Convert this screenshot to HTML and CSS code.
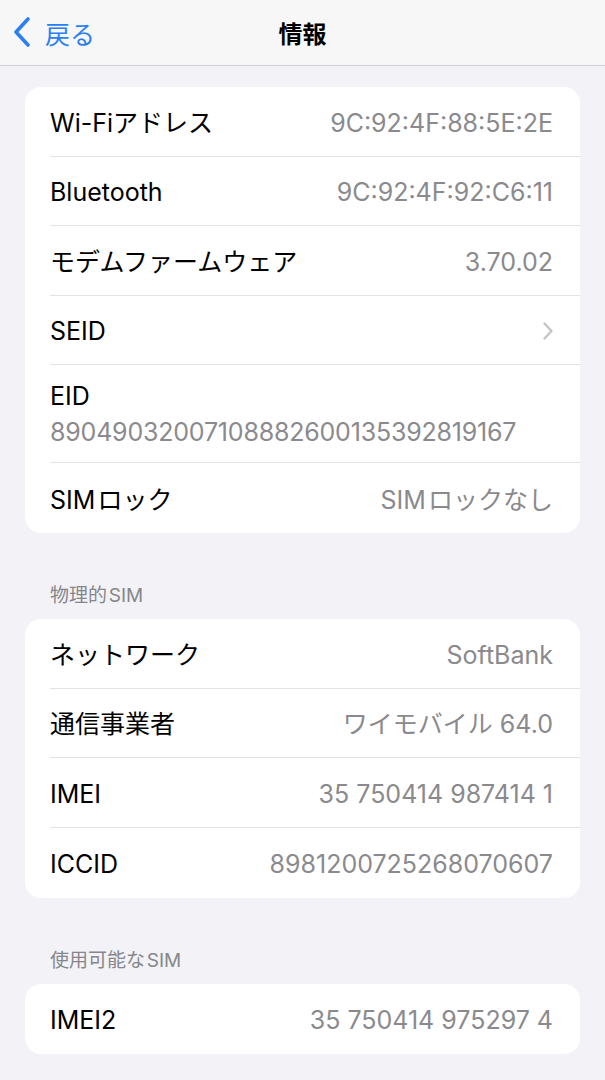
FILE: index.html
```html
<!DOCTYPE html>
<html lang="ja">

<head>
    <meta charset="UTF-8">
    <meta name="viewport" content="width=device-width, initial-scale=1.0">
    <title>情報</title>
    <link rel="stylesheet" href="styles.css">
</head>

<body>
    <div class="nav">
        <div class="back">
            <svg class="back-icon" width="18" height="32" viewBox="0 0 18 32">
                <path d="M15 3 L3 16 L15 29" fill="none" stroke="#2a7ff4" stroke-width="3.6" stroke-linecap="round" stroke-linejoin="round" />
            </svg>
            <span>戻る</span>
        </div>
        <div class="title">情報</div>
    </div>

    <div class="group first">
        <div class="row"><span class="label">Wi-Fiアドレス</span><span class="value">9C:92:4F:88:5E:2E</span></div>
        <div class="row"><span class="label">Bluetooth</span><span class="value">9C:92:4F:92:C6:11</span></div>
        <div class="row"><span class="label">モデムファームウェア</span><span class="value">3.70.02</span></div>
        <div class="row"><span class="label">SEID</span>
            <svg class="chev" width="12" height="20" viewBox="0 0 12 20">
                <path d="M2.5 2.5 L9.5 10 L2.5 17.5" fill="none" stroke="#c4c4c7" stroke-width="2.4" stroke-linecap="round" stroke-linejoin="round" />
            </svg>
        </div>
        <div class="row tall">
            <span class="label">EID</span>
            <span class="value eid">89049032007108882600135392819167</span>
        </div>
        <div class="row"><span class="label">SIM&#8202;ロック</span><span class="value">SIM&#8202;ロックなし</span></div>
    </div>

    <div class="header">物理的&#8202;SIM</div>
    <div class="group">
        <div class="row"><span class="label">ネットワーク</span><span class="value">SoftBank</span></div>
        <div class="row"><span class="label">通信事業者</span><span class="value">ワイモバイル 64.0</span></div>
        <div class="row"><span class="label">IMEI</span><span class="value">35 750414 987414 1</span></div>
        <div class="row"><span class="label">ICCID</span><span class="value">8981200725268070607</span></div>
    </div>

    <div class="header">使用可能な&#8202;SIM</div>
    <div class="group">
        <div class="row"><span class="label">IMEI2</span><span class="value">35 750414 975297 4</span></div>
    </div>
</body>

</html>
```

FILE: styles.css
```css
body {
    margin: 0;
    background-color: #f2f2f7;
    font-family: "Inter", "Noto Sans CJK JP", sans-serif;
    color: #000;
}

.nav {
    position: relative;
    display: flex;
    align-items: center;
    justify-content: center;
    height: 65px;
    background-color: #f7f7f8;
    border-bottom: 1px solid #cfcfd3;
}

.back {
    position: absolute;
    left: 13px;
    top: 0;
    height: 65px;
    display: flex;
    align-items: center;
    gap: 14px;
    color: #2a7ff4;
    font-size: 25px;
}

.back-icon {
    margin-top: -2px;
}

.title {
    font-size: 24px;
    font-weight: 700;
}

.group {
    margin: 0 25px;
    background-color: #fff;
    border-radius: 16px;
    overflow: hidden;
}

.group.first {
    margin-top: 21px;
}

.row {
    box-sizing: border-box;
    display: flex;
    align-items: center;
    justify-content: space-between;
    height: 69.5px;
    margin-left: 25px;
    padding: 3px 27px 0 0;
    border-bottom: 1px solid #e3e3e6;
    font-size: 25px;
    line-height: 30px;
}

.row:last-child {
    border-bottom: none;
    height: 70px;
}

.row.tall {
    height: 98px;
    padding-top: 0;
    flex-direction: column;
    align-items: flex-start;
    justify-content: center;
    gap: 6px;
}

.value {
    color: #8a8a8e;
}

.eid {
    letter-spacing: -0.2px;
}

.chev {
    margin-right: -1px;
}

.header {
    padding: 51px 0 11px 50px;
    font-size: 19px;
    line-height: 24px;
    color: #86868b;
}
```
